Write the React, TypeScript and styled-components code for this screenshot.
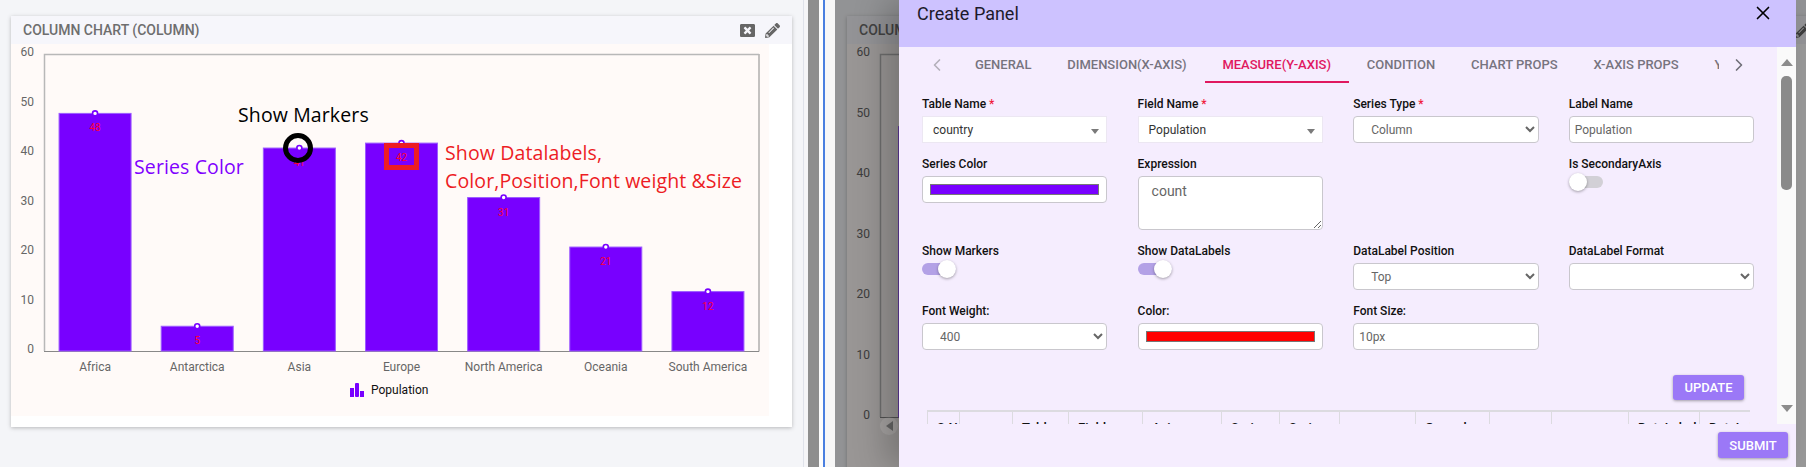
import React from "react";
import styled, { createGlobalStyle } from "styled-components";
import { ChevronLeft, ChevronRight, X } from "lucide-react";
import { FaPencilAlt, FaWindowClose } from "react-icons/fa";

const GlobalStyle = createGlobalStyle`
  html, body {
    margin: 0;
    padding: 0;
    overflow: hidden;
    font-family: Roboto, "Liberation Sans", sans-serif;
  }
`;

const Page = styled.div`
  display: flex;
  width: 1806px;
  height: 467px;
  overflow: hidden;
`;

const LeftPane = styled.div`
  position: relative;
  flex: 0 0 804px;
  background: #f4f5f8;
  padding: 16px 0 0 11px;
  box-sizing: border-box;
  border-right: 1px solid #dfe2ea;
`;

const Strip = styled.div<{ $width: number; $color: string }>`
  flex: 0 0 ${(p) => p.$width}px;
  background: ${(p) => p.$color};
`;

const RightPane = styled.div`
  position: relative;
  flex: 1;
  background: #f4f5f8;
  padding: 16px 0 0 12px;
  overflow: hidden;
`;

const Card = styled.div<{ $width: number; $height: number }>`
  position: relative;
  width: ${(p) => p.$width}px;
  height: ${(p) => p.$height}px;
  background: #fff;
  box-shadow: 0 1px 4px rgba(0, 0, 0, 0.25);
`;

const CardHeader = styled.div`
  display: flex;
  align-items: center;
  justify-content: space-between;
  height: 28px;
  padding: 0 12px;
  background: #f6f6fb;
  color: #6e6e6e;
  font-size: 14px;
  font-weight: 500;
`;

const CardActions = styled.div`
  display: flex;
  align-items: center;
  gap: 10px;
  color: #666;
  font-size: 15px;
`;

const ChartWrap = styled.div<{ $width: number }>`
  width: ${(p) => p.$width}px;
  background: #fffaf8;
  line-height: 0;
`;

const Annotation = styled.div<{ $x: number; $y: number; $color: string }>`
  position: absolute;
  left: ${(p) => p.$x}px;
  top: ${(p) => p.$y}px;
  color: ${(p) => p.$color};
  font-family: "Open Sans", "Noto Sans", sans-serif;
  font-size: 19.5px;
  font-weight: 500;
  letter-spacing: 0.12px;
  line-height: 28px;
  white-space: nowrap;
`;

const RingMark = styled.div`
  position: absolute;
  left: 272px;
  top: 117px;
  width: 30px;
  height: 30px;
  border: 5px solid #000;
  border-radius: 50%;
  box-sizing: border-box;
`;

const BoxMark = styled.div`
  position: absolute;
  left: 373px;
  top: 127px;
  width: 35px;
  height: 27px;
  border: 5px solid #ed1c24;
  box-sizing: border-box;
`;

const Backdrop = styled.div`
  position: absolute;
  inset: 0;
  background: rgba(0, 0, 0, 0.4);
`;

const ScrollNub = styled.div`
  position: absolute;
  left: 45px;
  top: 417px;
  width: 18px;
  height: 18px;
  border-radius: 50%;
  background: rgba(255, 255, 255, 0.12);
  display: flex;
  align-items: center;
  justify-content: center;

  &::before {
    content: "";
    border-style: solid;
    border-width: 5px 7px 5px 0;
    border-color: transparent #666 transparent transparent;
  }
`;

const Modal = styled.div`
  position: absolute;
  left: 64px;
  top: 0;
  width: 897px;
  height: 467px;
  display: flex;
  flex-direction: column;
  background: #f5edfe;
  box-shadow: -14px 0 30px rgba(0, 0, 0, 0.22);
`;

const ModalHeader = styled.div`
  flex: 0 0 47px;
  display: flex;
  justify-content: space-between;
  align-items: flex-start;
  padding: 2px 22px 0 18px;
  box-sizing: border-box;
  background: #cdc2ff;
  color: #1d1a2b;
  font-size: 18px;
  line-height: 24px;
`;

const CloseButton = styled.div`
  color: #000;
  line-height: 0;
`;

const ModalMiddle = styled.div`
  flex: 0 0 377px;
  display: flex;
  overflow: hidden;
`;

const ScrollBody = styled.div`
  flex: 1;
  min-width: 0;
  overflow: hidden;
`;

const TabBar = styled.div`
  display: flex;
  height: 36px;
  margin: 0 18px;
`;

const TabArrow = styled.div<{ $active?: boolean }>`
  flex: 0 0 40px;
  display: flex;
  align-items: center;
  justify-content: center;
  color: ${(p) => (p.$active ? "#6f6f78" : "#b3b0ba")};
`;

const TabList = styled.div`
  flex: 1;
  min-width: 0;
  display: flex;
  overflow: hidden;
`;

const Tab = styled.div<{ $active?: boolean }>`
  flex: none;
  display: flex;
  align-items: center;
  padding: 0 17.9px;
  height: 36px;
  box-sizing: border-box;
  font-size: 13px;
  font-weight: 500;
  white-space: nowrap;
  color: ${(p) => (p.$active ? "#e0185f" : "#77747f")};
  border-bottom: 2px solid ${(p) => (p.$active ? "#e0185f" : "transparent")};
`;

const FormGrid = styled.div`
  display: grid;
  grid-template-columns: repeat(4, 185.4px);
  column-gap: 30.2px;
  row-gap: 13px;
  padding: 13px 0 0 23px;
`;

const Field = styled.div`
  display: flex;
  flex-direction: column;
  align-items: stretch;
`;

const Label = styled.label`
  height: 16px;
  margin-bottom: 4px;
  font-size: 12px;
  font-weight: 500;
  line-height: 16px;
  color: #111;
`;

const Required = styled.span`
  color: #f01c3c;
`;

const FlatSelect = styled.div`
  display: flex;
  align-items: center;
  justify-content: space-between;
  height: 27px;
  padding: 0 7px 0 10px;
  box-sizing: border-box;
  background: #fff;
  border: 1px solid #ece7f2;
  font-size: 12px;
  color: #333;

  &::after {
    content: "";
    margin-top: 3px;
    border-style: solid;
    border-width: 5px 4.5px 0;
    border-color: #7a7a7a transparent transparent;
  }
`;

const controlBase = `
  width: 100%;
  height: 27px;
  box-sizing: border-box;
  background: #fff;
  border: 1px solid #c9c7cd;
  border-radius: 4px;
  font-family: Roboto, "Liberation Sans", sans-serif;
  font-size: 12px;
  color: #666;
  outline: none;
`;

const NativeSelect = styled.select`
  ${controlBase}
  padding: 0 4px 0 13px;
`;

const TextInput = styled.input`
  ${controlBase}
  padding: 0 5px;
`;

const ColorInput = styled.input`
  ${controlBase}
  padding: 7px;

  &::-webkit-color-swatch-wrapper {
    padding: 0;
  }
  &::-webkit-color-swatch {
    border: 1px solid #777;
    border-radius: 0;
  }
`;

const TextArea = styled.textarea`
  ${controlBase}
  height: 54px;
  padding: 6px 13px;
  font-size: 14px;
`;

const SwitchTrack = styled.div<{ $on?: boolean }>`
  position: relative;
  width: 34px;
  height: 12px;
  border-radius: 6px;
  background: ${(p) => (p.$on ? "#b3a1e6" : "#d2d0d6")};
`;

const SwitchKnob = styled.div<{ $on?: boolean }>`
  position: absolute;
  top: -3px;
  left: ${(p) => (p.$on ? "16px" : "0")};
  width: 18px;
  height: 18px;
  border-radius: 50%;
  background: #fff;
  box-shadow: 0 1px 3px rgba(0, 0, 0, 0.35);
`;

const UpdateRow = styled.div`
  display: flex;
  justify-content: flex-end;
  margin: 25px 33px 10px 0;
`;

const ActionButton = styled.button<{ $width: number; $height: number }>`
  width: ${(p) => p.$width}px;
  height: ${(p) => p.$height}px;
  padding: 0;
  border: none;
  border-radius: 3px;
  background: #9b78f7;
  color: #fff;
  font-family: Roboto, "Liberation Sans", sans-serif;
  font-size: 13px;
  font-weight: 500;
  box-shadow: 0 1px 3px rgba(0, 0, 0, 0.35);
`;

const RowTable = styled.table`
  margin-left: 28px;
  width: 822px;
  table-layout: fixed;
  border-collapse: collapse;

  th {
    height: 40px;
    padding: 9px 0 0 9px;
    box-sizing: border-box;
    vertical-align: top;
    text-align: left;
    border: 1px solid #dcdbe0;
    border-top-width: 2px;
    font-size: 13px;
    font-weight: 500;
    line-height: 14px;
    color: #111;
    overflow: hidden;
    white-space: nowrap;
  }
  th:last-child {
    border-right: none;
  }
`;

const Scrollbar = styled.div`
  flex: 0 0 19px;
  display: flex;
  flex-direction: column;
  align-items: center;
  background: #fafafa;
`;

const ScrollUp = styled.div`
  margin-top: 12px;
  border-style: solid;
  border-width: 0 6.5px 7px;
  border-color: transparent transparent #8c8c8c;
`;

const ScrollThumb = styled.div`
  width: 11px;
  height: 114px;
  margin-top: 10px;
  border-radius: 5px;
  background: #8a8a8a;
`;

const ScrollDown = styled.div`
  margin-top: auto;
  margin-bottom: 12px;
  border-style: solid;
  border-width: 7px 6.5px 0;
  border-color: #8c8c8c transparent transparent;
`;

const ModalFooter = styled.div`
  flex: 1;
  display: flex;
  justify-content: flex-end;
  padding: 8px 8px 0 0;
`;

const DATA = [
  { name: "Africa", value: 48 },
  { name: "Antarctica", value: 5 },
  { name: "Asia", value: 41 },
  { name: "Europe", value: 42 },
  { name: "North America", value: 31 },
  { name: "Oceania", value: 21 },
  { name: "South America", value: 12 },
];

const PURPLE = "#7800ff";
const PLOT_TOP = 10;
const PLOT_LEFT = 33;

function ColumnChart({ width, height, plotWidth, plotHeight }: { width: number; height: number; plotWidth: number; plotHeight: number }) {
  const bottom = PLOT_TOP + plotHeight;
  const step = plotWidth / DATA.length;
  const barWidth = step * 0.705;
  const textProps = { fontFamily: "Roboto, sans-serif", fontSize: 12, fill: "#666" };
  return (
    <svg width={width} height={height}>
      {[60, 50, 40, 30, 20, 10, 0].map((tick, i) => (
        <text key={tick} x={23} y={PLOT_TOP + 2 + (i * plotHeight) / 6} textAnchor="end" {...textProps}>
          {tick}
        </text>
      ))}
      <path d={`M${PLOT_LEFT} ${bottom + 0.5}H${PLOT_LEFT + plotWidth}V${PLOT_TOP}`} fill="none" stroke="#888" />
      <path d={`M${PLOT_LEFT + 0.5} ${bottom}V${PLOT_TOP + 0.5}H${PLOT_LEFT + plotWidth}`} fill="none" stroke="#b8b8b8" strokeWidth={1.5} />
      {DATA.map((d, i) => {
        const center = PLOT_LEFT + step * (i + 0.5);
        const top = bottom - (d.value / 60) * plotHeight;
        return (
          <g key={d.name}>
            <rect x={center - barWidth / 2} y={top} width={barWidth} height={bottom - top} fill={PURPLE} stroke="#9c5cff" strokeWidth={1} />
            <circle cx={center} cy={top} r={2.5} fill="#fff" stroke={PURPLE} strokeWidth={1.6} />
            <text x={center} y={top + 18} textAnchor="middle" fontFamily="Roboto, sans-serif" fontSize={10} fill="#ff0033">
              {d.value}
            </text>
            <text x={center} y={bottom + 20} textAnchor="middle" {...textProps}>
              {d.name}
            </text>
          </g>
        );
      })}
      <g fill={PURPLE}>
        <rect x={339} y={344} width={4} height={9} />
        <rect x={344} y={339} width={4} height={14} rx={1} />
        <rect x={349} y={347} width={4} height={6} />
      </g>
      <text x={360} y={350} fontFamily="Roboto, sans-serif" fontSize={12} fill="#111">
        Population
      </text>
    </svg>
  );
}

function ChartCard({ width, height, chartWidth, chartHeight, plotWidth, plotHeight, children }: {
  width: number;
  height: number;
  chartWidth: number;
  chartHeight: number;
  plotWidth: number;
  plotHeight: number;
  children?: React.ReactNode;
}) {
  return (
    <Card $width={width} $height={height}>
      <CardHeader>
        <span>COLUMN CHART (COLUMN)</span>
        <CardActions>
          <FaWindowClose />
          <FaPencilAlt />
        </CardActions>
      </CardHeader>
      <ChartWrap $width={chartWidth}>
        <ColumnChart width={chartWidth} height={chartHeight} plotWidth={plotWidth} plotHeight={plotHeight} />
      </ChartWrap>
      {children}
    </Card>
  );
}

const TABS = ["GENERAL", "DIMENSION(X-AXIS)", "MEASURE(Y-AXIS)", "CONDITION", "CHART PROPS", "X-AXIS PROPS", "Y-AXIS PROPS"];

const TABLE_COLS = [
  { label: "S.No", width: 32 },
  { label: "", width: 53 },
  { label: "Table", width: 56 },
  { label: "Field", width: 74 },
  { label: "Axis", width: 79 },
  { label: "Series", width: 58 },
  { label: "Series", width: 60 },
  { label: "", width: 76 },
  { label: "Group by", width: 74 },
  { label: "", width: 62 },
  { label: "", width: 77 },
  { label: "DataLabel", width: 71 },
  { label: "DataLabel", width: 50 },
];

function PickSelect({ value }: { value: string }) {
  return (
    <NativeSelect defaultValue={value}>
      <option value={value}>{value}</option>
    </NativeSelect>
  );
}

function MeasureForm() {
  return (
    <FormGrid>
      <Field>
        <Label>Table Name <Required>*</Required></Label>
        <FlatSelect>country</FlatSelect>
      </Field>
      <Field>
        <Label>Field Name <Required>*</Required></Label>
        <FlatSelect>Population</FlatSelect>
      </Field>
      <Field>
        <Label>Series Type <Required>*</Required></Label>
        <PickSelect value="Column" />
      </Field>
      <Field>
        <Label>Label Name</Label>
        <TextInput defaultValue="Population" />
      </Field>

      <Field>
        <Label>Series Color</Label>
        <ColorInput type="color" defaultValue="#7800ff" />
      </Field>
      <Field>
        <Label>Expression</Label>
        <TextArea defaultValue="count" />
      </Field>
      <Field />
      <Field>
        <Label>Is SecondaryAxis</Label>
        <SwitchTrack>
          <SwitchKnob />
        </SwitchTrack>
      </Field>

      <Field>
        <Label>Show Markers</Label>
        <SwitchTrack $on>
          <SwitchKnob $on />
        </SwitchTrack>
      </Field>
      <Field>
        <Label>Show DataLabels</Label>
        <SwitchTrack $on>
          <SwitchKnob $on />
        </SwitchTrack>
      </Field>
      <Field>
        <Label>DataLabel Position</Label>
        <PickSelect value="Top" />
      </Field>
      <Field>
        <Label>DataLabel Format</Label>
        <PickSelect value="" />
      </Field>

      <Field>
        <Label>Font Weight:</Label>
        <PickSelect value="400" />
      </Field>
      <Field>
        <Label>Color:</Label>
        <ColorInput type="color" defaultValue="#ff0000" />
      </Field>
      <Field>
        <Label>Font Size:</Label>
        <TextInput defaultValue="10px" />
      </Field>
    </FormGrid>
  );
}

export default function App() {
  return (
    <Page>
      <GlobalStyle />
      <LeftPane>
        <ChartCard width={781} height={411} chartWidth={758} chartHeight={372} plotWidth={715} plotHeight={297}>
          <Annotation $x={227} $y={85} $color="#000">Show Markers</Annotation>
          <Annotation $x={123} $y={137} $color="#7f00ff">Series Color</Annotation>
          <Annotation $x={434} $y={123} $color="#ed1c24">
            Show Datalabels,
            <br />
            Color,Position,Font weight &amp;Size
          </Annotation>
          <RingMark />
          <BoxMark />
        </ChartCard>
      </LeftPane>
      <Strip $width={4} $color="#f5f5f7" />
      <Strip $width={11} $color="#8e8e8e" />
      <Strip $width={4} $color="#fdfdfd" />
      <Strip $width={1.5} $color="#4a7fe0" />
      <Strip $width={10.5} $color="#f7f7f7" />
      <RightPane>
        <ChartCard width={975} height={520} chartWidth={940} chartHeight={500} plotWidth={880} plotHeight={363} />
        <Backdrop />
        <ScrollNub />
        <Modal>
          <ModalHeader>
            <span>Create Panel</span>
            <CloseButton>
              <X size={22} strokeWidth={1.8} />
            </CloseButton>
          </ModalHeader>
          <ModalMiddle>
            <ScrollBody>
              <TabBar>
                <TabArrow>
                  <ChevronLeft size={20} />
                </TabArrow>
                <TabList>
                  {TABS.map((tab) => (
                    <Tab key={tab} $active={tab === "MEASURE(Y-AXIS)"}>{tab}</Tab>
                  ))}
                </TabList>
                <TabArrow $active>
                  <ChevronRight size={20} />
                </TabArrow>
              </TabBar>
              <MeasureForm />
              <UpdateRow>
                <ActionButton $width={71} $height={25}>UPDATE</ActionButton>
              </UpdateRow>
              <RowTable>
                <colgroup>
                  {TABLE_COLS.map((col, i) => (
                    <col key={i} width={col.width} />
                  ))}
                </colgroup>
                <thead>
                  <tr>
                    {TABLE_COLS.map((col, i) => (
                      <th key={i}>{col.label}</th>
                    ))}
                  </tr>
                </thead>
              </RowTable>
            </ScrollBody>
            <Scrollbar>
              <ScrollUp />
              <ScrollThumb />
              <ScrollDown />
            </Scrollbar>
          </ModalMiddle>
          <ModalFooter>
            <ActionButton $width={70} $height={26}>SUBMIT</ActionButton>
          </ModalFooter>
        </Modal>
      </RightPane>
    </Page>
  );
}
